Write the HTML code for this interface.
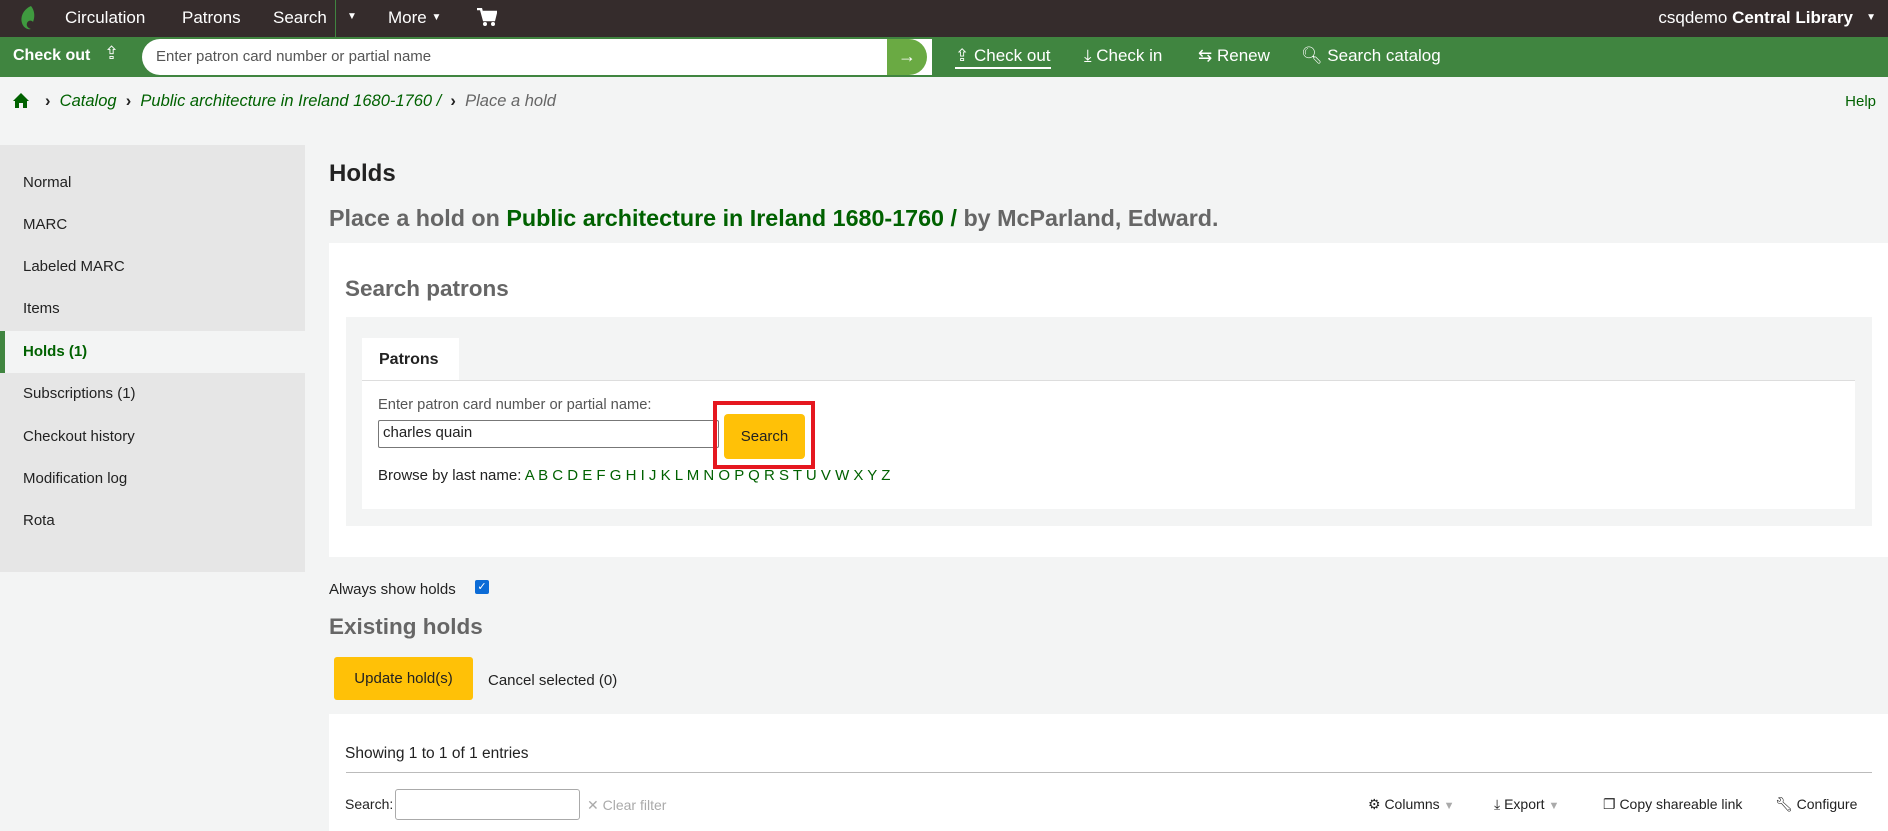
<!DOCTYPE html>
<html><head><meta charset="utf-8"><style>
*{margin:0;padding:0;box-sizing:border-box}
body{width:1888px;height:831px;overflow:hidden;background:#f3f4f4;font-family:"Liberation Sans",sans-serif;font-size:15px;color:#222;position:relative}
.a{position:absolute;white-space:nowrap}
.g{color:#006100}
#top{position:absolute;left:0;top:0;width:1888px;height:37px;background:#352c2c;color:#fff;font-size:17px}
#top .a{top:8px}
#gb{position:absolute;left:0;top:37px;width:1888px;height:40px;background:#408540;color:#fff;font-size:17px}
#side{position:absolute;left:0;top:145px;width:305px;height:427px;background:#e6e6e6}
#side div{position:absolute;left:23px;font-size:15px}
</style></head><body>
<div id="top">
<svg class="a" style="left:20px;top:5px" width="16" height="26" viewBox="0 0 16 26"><path d="M11 1C4 4 0 11 2 18c1 4 5 7 9 6-3-1-5-3-4-6 1-3 5-3 6-1 2-5 2-11-2-16z" fill="#3f9a3f"/></svg>
<span class="a" style="left:65px">Circulation</span>
<span class="a" style="left:182px">Patrons</span>
<span class="a" style="left:273px">Search</span>
<div class="a" style="left:335px;top:0;width:1px;height:37px;background:#408540"></div>
<span class="a" style="left:347px;top:11px;font-size:10px">▼</span>
<span class="a" style="left:388px">More <span style="font-size:10px;vertical-align:3px">▼</span></span>
<svg class="a" style="left:477px;top:8px" width="20" height="19" viewBox="0 0 20 19"><path d="M0 1h4l3 11h10l2-8H6" fill="none" stroke="#fff" stroke-width="2.5"/><rect x="6" y="4" width="12" height="7" fill="#fff"/><circle cx="8" cy="16" r="2" fill="#fff"/><circle cx="16" cy="16" r="2" fill="#fff"/></svg>
<span class="a" style="right:35px">csqdemo <b>Central Library</b></span>
<span class="a" style="right:12px;top:12px;font-size:10px">▼</span>
</div>
<div id="gb">
<b class="a" style="left:13px;top:10px;font-size:16px">Check out</b>
<span class="a" style="left:104px;top:6px;font-size:18px">⇪</span>
<div class="a" style="left:142px;top:2px;width:790px;height:36px;background:#fff;border-radius:18px 0 0 18px"></div>
<span class="a" style="left:156px;top:11px;font-size:15px;color:#555">Enter patron card number or partial name</span>
<div class="a" style="left:887px;top:2px;width:40px;height:36px;background:#6aaa43;border-radius:0 18px 18px 0;color:#fff;text-align:center;line-height:34px;font-size:18px">→</div>
<span class="a" style="left:955px;top:9px;border-bottom:2px solid #fff;padding-bottom:1px">⇪ Check out</span>
<span class="a" style="left:1084px;top:9px">⤓ Check in</span>
<span class="a" style="left:1198px;top:9px">⇆ Renew</span>
<span class="a" style="left:1301px;top:9px">🔍︎ Search catalog</span>
</div>
<svg class="a" style="left:13px;top:93px" width="16" height="15" viewBox="0 0 16 15"><path d="M8 0L0 8h2v7h4v-5h4v5h4V8h2z" fill="#006100"/></svg>
<div class="a" style="left:45px;top:92px;font-size:16.5px;font-style:italic"><b style="font-style:normal">›</b>&nbsp;&nbsp;<span class="g">Catalog</span>&nbsp;&nbsp;<b style="font-style:normal">›</b>&nbsp;&nbsp;<span class="g">Public architecture in Ireland 1680-1760 /</span>&nbsp;&nbsp;<b style="font-style:normal">›</b>&nbsp;&nbsp;<span style="color:#666">Place a hold</span></div>
<span class="a g" style="right:12px;top:93px">Help</span>
<div id="side">
<div style="top:29px">Normal</div>
<div style="top:71px">MARC</div>
<div style="top:113px">Labeled MARC</div>
<div style="top:155px">Items</div>
<div style="left:0;top:186px;width:305px;height:42px;background:#f3f4f4;border-left:5px solid #408540"></div>
<div style="top:198px;font-weight:bold;color:#006100">Holds (1)</div>
<div style="top:240px">Subscriptions (1)</div>
<div style="top:283px">Checkout history</div>
<div style="top:325px">Modification log</div>
<div style="top:367px">Rota</div>
</div>
<b class="a" style="left:329px;top:160px;font-size:24px;color:#222">Holds</b>
<b class="a" style="left:329px;top:205px;font-size:23.3px;color:#666">Place a hold on <span class="g">Public architecture in Ireland 1680-1760 /</span> by McParland, Edward.</b>
<div class="a" style="left:329px;top:243px;width:1559px;height:314px;background:#fff"></div>
<b class="a" style="left:345px;top:276px;font-size:22.5px;color:#666">Search patrons</b>
<div class="a" style="left:346px;top:317px;width:1526px;height:209px;background:#f3f4f4"></div>
<div class="a" style="left:362px;top:338px;width:97px;height:43px;background:#fff"></div>
<div class="a" style="left:362px;top:380px;width:1493px;height:1px;background:#ddd"></div>
<b class="a" style="left:379px;top:351px;font-size:16px">Patrons</b>
<div class="a" style="left:362px;top:381px;width:1493px;height:128px;background:#fff"></div>
<span class="a" style="left:378px;top:397px;font-size:14.7px;color:#555">Enter patron card number or partial name:</span>
<div class="a" style="left:378px;top:420px;width:341px;height:28px;border:1px solid #777;border-radius:2px;padding:3px 4px;font-size:15px">charles quain</div>
<div class="a" style="left:713px;top:401px;width:102px;height:68px;border:4px solid #e5171f"></div>
<div class="a" style="left:724px;top:414px;width:81px;height:45px;background:#ffc107;border-radius:4px;text-align:center;line-height:45px;font-size:15px">Search</div>
<span class="a" style="left:378px;top:467px;font-size:15px">Browse by last name: <span class="g">A B C D E F G H I J K L M N O P Q R S T U V W X Y Z</span></span>
<span class="a" style="left:329px;top:581px;font-size:15px">Always show holds</span>
<div class="a" style="left:475px;top:580px;width:14px;height:14px;background:#0b6bd6;border-radius:2px;color:#fff;font-size:11px;line-height:14px;text-align:center">✓</div>
<b class="a" style="left:329px;top:614px;font-size:22.5px;color:#666">Existing holds</b>
<div class="a" style="left:334px;top:657px;width:139px;height:43px;background:#ffc107;border-radius:3px;text-align:center;line-height:43px;font-size:15px">Update hold(s)</div>
<span class="a" style="left:488px;top:672px;font-size:15px">Cancel selected (0)</span>
<div class="a" style="left:329px;top:714px;width:1559px;height:117px;background:#fff"></div>
<span class="a" style="left:345px;top:745px;font-size:15.5px">Showing 1 to 1 of 1 entries</span>
<div class="a" style="left:346px;top:772px;width:1526px;height:1px;background:#bbb"></div>
<span class="a" style="left:345px;top:796px;font-size:14px">Search:</span>
<div class="a" style="left:395px;top:789px;width:185px;height:31px;border:1px solid #aaa;border-radius:3px"></div>
<span class="a" style="left:587px;top:797px;font-size:14px;color:#aaa">✕ Clear filter</span>
<span class="a" style="left:1368px;top:796px;font-size:14px">⚙ Columns <span style="color:#aaa;font-size:11px">▼</span></span>
<span class="a" style="left:1494px;top:796px;font-size:14px">⤓ Export <span style="color:#aaa;font-size:11px">▼</span></span>
<span class="a" style="left:1603px;top:796px;font-size:14px">❐ Copy shareable link</span>
<span class="a" style="left:1775px;top:796px;font-size:14px">🔧︎ Configure</span>
</body></html>
